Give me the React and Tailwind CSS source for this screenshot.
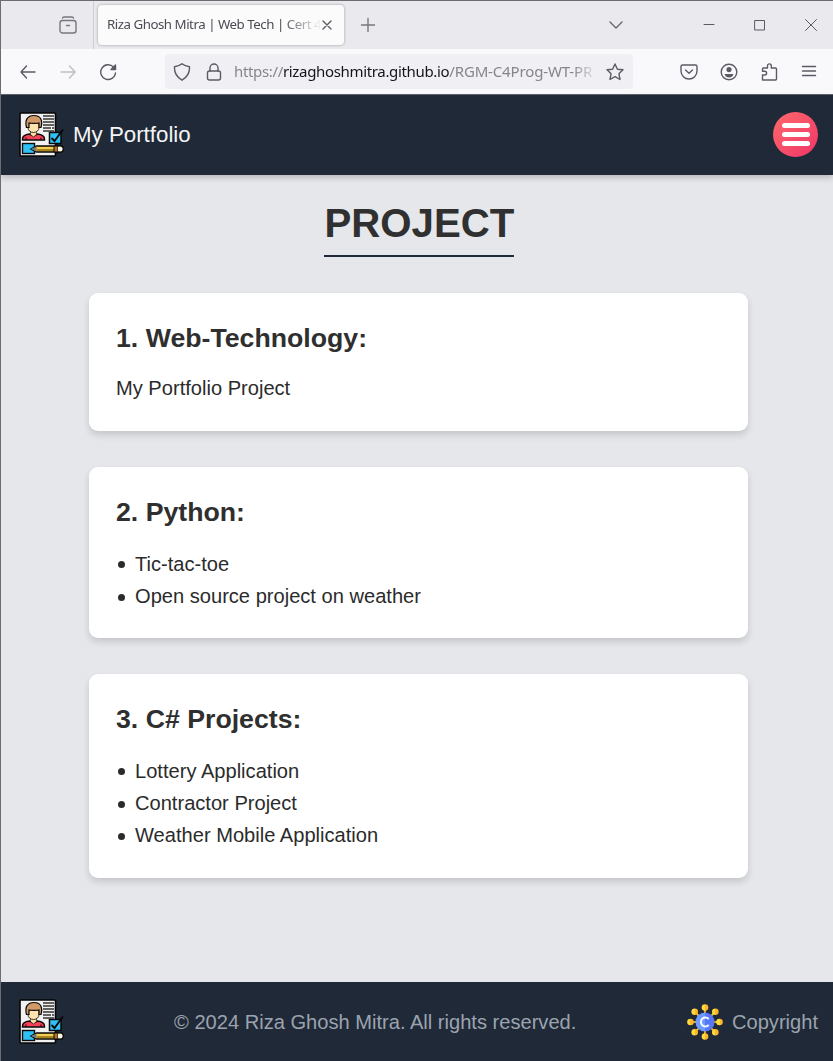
import React from "react";

function Logo() {
  return (
    <svg viewBox="0 0 45 46" className="h-[46px] w-[45px] shrink-0">
      <rect x="1" y="1" width="35.5" height="43" rx="1" fill="#f1f1f2" stroke="#050505" strokeWidth="1.6" />
      <path d="M24 4h11M24 7h11M24 10h11M24 13h11M24 16h8M33 16h2M24 19h11" stroke="#343434" strokeWidth="1.4" />
      <path d="M3.5 28v-1c0-3.5 3.5-4.500 7-5l4 2 4-2c4 .5 7 1.500 7 5v1z" fill="#f73f58" stroke="#090909" strokeWidth="1.4" />
      <path d="M7 25.500v2M22 25.500v2" stroke="#090909" />
      <path d="M11.500 19v3.500l3 2.500 3-2.500V19z" fill="#ffdda0" stroke="#090909" strokeWidth=".6" />
      <path d="M9 11v4.500c0 3 2.500 5 5.500 5s5.500-2 5.500-5V11z" fill="#ffe3ae" stroke="#090909" strokeWidth=".8" />
      <path d="M7.500 15.500c-2-7.500 1-12 7.500-12s9 4.500 7 12h-2v-4.500c-4 .5-7 .3-10 0v4.500z" fill="#d29a69" stroke="#090909" strokeWidth="1.2" />
      <rect x="30.5" y="20.500" width="11.500" height="11" fill="#2fc1f5" stroke="#090909" strokeWidth="1.5" />
      <path d="m32.500 26 3 3L44 17.500" fill="none" stroke="#050505" strokeWidth="1.800" />
      <rect x="3.500" y="31.500" width="12" height="10" fill="#2fc1f5" stroke="#090909" strokeWidth="1.4" />
      <path d="m12 37 5.500-3H42c3 0 3 6 0 6H17.500z" fill="#e9b62f" stroke="#090909" strokeWidth="1.400" />
      <path d="m12 37 5.500-2.500v5z" fill="#777b80" />
      <path d="M18 36h17" stroke="#ffe87a" />
      <path d="M18 38h17" stroke="#2b260f" strokeWidth=".7" />
      <path d="M35 34v6h4v-6z" fill="#b9742b" stroke="#090909" />
      <path d="M39 34.700h2.500c2.500 0 2.500 4.600 0 4.600H39z" fill="#f6f6f6" />
    </svg>
  );
}

function CopyrightIcon() {
  const rays = [
    [18, 3.5], [28.3, 7.7], [32.5, 18], [28.3, 28.3], [18, 32.5], [7.7, 28.3], [3.5, 18], [7.7, 7.7],
  ];
  return (
    <svg viewBox="0 0 36 36" className="h-9 w-9 shrink-0">
      <defs>
        <linearGradient id="ray" x1="0" x2="1">
          <stop offset=".5" stopColor="#ffdc3b" />
          <stop offset=".5" stopColor="#fdb62e" />
        </linearGradient>
        <linearGradient id="coin" x1="0" x2="1">
          <stop offset=".5" stopColor="#6d9aff" />
          <stop offset=".5" stopColor="#5877f7" />
        </linearGradient>
      </defs>
      {rays.map(([x, y]) => (
        <g key={`${x}-${y}`}>
          <path d={`M18 18L${x} ${y}`} stroke="#f9bf35" strokeWidth="1.7" />
          <circle cx={x} cy={y} r="3.300" fill="url(#ray)" />
        </g>
      ))}
      <circle cx="18" cy="18" r="9.500" fill="url(#coin)" />
      <path d="M21.700 15.200a4.400 4.400 0 1 0 0 5.600" fill="none" stroke="#f4f8ff" strokeWidth="2" />
    </svg>
  );
}

function Glyph({ children, className = "" }) {
  return (
    <svg
      viewBox="0 0 18 18"
      className={`h-[18px] w-[18px] shrink-0 fill-none stroke-[#5b5b66] ${className}`}
      strokeWidth="1.4"
      strokeLinecap="round"
      strokeLinejoin="round"
    >
      {children}
    </svg>
  );
}

function TabBar() {
  return (
    <div className="flex h-12 items-center bg-[#eae9ee]">
      <div className="flex h-full w-[93px] items-center border-r border-[#cfced4] pl-[58px]">
        <Glyph className="stroke-[#77777f]">
          <rect x="1" y="4.500" width="16" height="12.500" rx="2.500" />
          <path d="M3.500 2q.3-1 1.500-1h8q1.200 0 1.500 1M7.500 9.500h3" />
        </Glyph>
      </div>
      <div className="ml-1 flex h-10 w-[246px] items-center rounded bg-[#fbfbfc] pl-[9px] shadow-[0_0_3px_rgba(0,0,0,0.35)]">
        <div className="w-[213px] whitespace-nowrap text-[13.3px] tracking-[-0.48px] text-[#4b4b53] [mask-image:linear-gradient(to_right,black_82%,transparent_101%)]">
          Riza Ghosh Mitra | Web Tech | Cert 4
        </div>
        <Glyph className="-ml-[2px] stroke-[#4b4b53]"><path d="m5 5 8 8m0-8-8 8" /></Glyph>
      </div>
      <Glyph className="ml-[15px] stroke-[#77777f]"><path d="M9 2.500v13M2.500 9h13" /></Glyph>
      <div className="ml-auto flex items-center pr-[13px]">
        <Glyph className="mr-[75px] stroke-[#66666e]"><path d="m3 6 6 6 6-6" /></Glyph>
        <Glyph className="mr-[33px]"><path d="M4 8.500h10" strokeWidth="1" /></Glyph>
        <Glyph className="mr-[33px]"><path d="M4 4.500h9.500V14H4z" strokeWidth="1" /></Glyph>
        <Glyph><path d="m3.500 3.500 11 11m0-11-11 11" strokeWidth="1" /></Glyph>
      </div>
    </div>
  );
}

function Toolbar() {
  return (
    <div className="flex h-[46px] items-center border-b border-[#62646c] bg-[#f9f9fb] pl-[18px]">
      <Glyph><path d="M16 9H2m5.500-6L2 9l5.500 6" /></Glyph>
      <Glyph className="ml-[22px] stroke-[#bdbdc3]"><path d="M2 9h14m-5.500-6L16 9l-5.500 6" /></Glyph>
      <Glyph className="ml-[22px]">
        <path d="M16.500 10a7.400 7.400 0 1 1-2-6l2 2" />
        <path d="M16.500 2v4.500H12z" fill="#5b5b66" />
      </Glyph>
      <div className="ml-[48px] flex h-[35px] w-[468px] items-center rounded bg-[#f0f0f4] pl-2">
        <Glyph><path d="M9 .8c2 1.700 4 2.500 7.500 2.900.4 6-1.500 10-7.500 13.500C3 13.700 1.100 9.700 1.500 3.700 5 3.300 7 2.500 9 .8z" /></Glyph>
        <Glyph className="ml-[14px]">
          <rect x="2.500" y="8" width="13" height="9" rx="2" />
          <path d="M5 8V5a4 4 0 0 1 8 0v3" />
        </Glyph>
        <div className="ml-[11px] w-[364px] whitespace-nowrap text-[15px] tracking-[-0.34px] text-[#85858d] [mask-image:linear-gradient(to_right,black_93%,transparent_100%)]">
          https://<span className="text-[#15141a]">rizaghoshmitra.github.io</span><span className="tracking-[-0.15px]">/RGM-C4Prog-WT-PR</span>
        </div>
        <Glyph className="ml-[8px]"><path d="m9 1 2.400 5.200 5.600.6-4.100 3.900 1.100 5.800L9 13.700l-5 2.800 1.100-5.800L1 6.800l5.600-.6z" /></Glyph>
      </div>
      <div className="ml-auto flex items-center gap-[22px] pr-[15px]">
        <Glyph><path d="M2.500 2h13q1.500 0 1.500 1.500V8A8 8 0 0 1 1 8V3.500Q1 2 2.500 2zM5.500 7 9 10.300 12.500 7" /></Glyph>
        <Glyph>
          <circle cx="9" cy="9" r="7.800" />
          <circle cx="9" cy="6.600" r="2.600" fill="#5b5b66" stroke="none" />
          <path d="M4.500 11h9c-.5 2.500-2.500 3.500-4.500 3.500S5 13.500 4.500 11z" fill="#5b5b66" stroke="none" />
        </Glyph>
        <Glyph><path d="M2.500 17v-5h2.200a1.900 1.900 0 0 0 0-3.800H2.500V6q0-1 1-1h4V2.800a1.900 1.900 0 0 1 3.800 0V5h4.200q1 0 1 1v10q0 1-1 1z" /></Glyph>
        <Glyph><path d="M2.500 3.500h13m-13 4.500h13m-13 4.500h13" /></Glyph>
      </div>
    </div>
  );
}

function Card({ title, children, className }) {
  return (
    <section className={`w-[659px] rounded-[9px] bg-white px-[27px] pt-[27px] text-[20.1px] leading-[32.3px] text-[#2b2b2b] shadow-[0_4px_7px_rgba(0,0,0,0.14)] ${className}`}>
      <h2 className="mb-[17px] whitespace-nowrap text-[26.7px] font-bold leading-9 text-[#2f2f2f]">{title}</h2>
      {children}
    </section>
  );
}

function Items({ items }) {
  return (
    <ul className="pt-[0.6px]">
      {items.map((item) => (
        <li key={item} className="flex items-center">
          <span className="ml-[2px] mr-[10px] mt-[2px] h-[7px] w-[7px] rounded-full bg-[#2b2b2b]" />
          {item}
        </li>
      ))}
    </ul>
  );
}

export default function App() {
  return (
    <div className="flex h-[1061px] w-[833px] flex-col overflow-hidden border-l border-t border-[#6d6c70] bg-[#e5e7eb] font-['Liberation_Sans',Arial,sans-serif]">
      <div className="shrink-0 font-['Noto_Sans',sans-serif]">
        <TabBar />
        <Toolbar />
      </div>
      <header className="flex h-20 shrink-0 items-center bg-[#1f2937] pl-[18px] pr-[15px] shadow-[0_3px_6px_rgba(0,0,0,0.2)]">
        <Logo />
        <span className="ml-[9px] whitespace-nowrap text-[22.3px] text-[#f3f4f6]">My Portfolio</span>
        <div className="-mt-px ml-auto flex h-[45px] w-[45px] flex-col items-center justify-center gap-1 rounded-full bg-linear-to-br from-[#ff686b] to-[#ee3269]">
          <span className="h-[5px] w-7 rounded-full bg-white" />
          <span className="h-[5px] w-7 rounded-full bg-white" />
          <span className="h-[5px] w-7 rounded-full bg-white" />
        </div>
      </header>
      <main className="flex flex-1 flex-col items-center pl-[3px] pt-[25px]">
        <h1 className="mb-9 h-[57px] w-[190px] whitespace-nowrap border-b-2 border-[#1f2937] pl-px text-center text-[40.2px] font-bold leading-[48px] text-[#303030]">
          PROJECT
        </h1>
        <div className="flex flex-col gap-9">
          <Card title="1. Web-Technology:" className="h-[138px]">
            <p className="-mt-px">My Portfolio Project</p>
          </Card>
          <Card title="2. Python:" className="h-[171px]">
            <Items items={["Tic-tac-toe", "Open source project on weather"]} />
          </Card>
          <Card title="3. C# Projects:" className="h-[204px]">
            <Items items={["Lottery Application", "Contractor Project", "Weather Mobile Application"]} />
          </Card>
        </div>
      </main>
      <footer className="flex h-[79px] shrink-0 items-center bg-[#1f2937] pl-[18px] pr-[15px] pt-px text-[20.1px] text-[#9ca3af]">
        <Logo />
        <span className="ml-[110px] whitespace-nowrap pt-px">© 2024 Riza Ghosh Mitra. All rights reserved.</span>
        <div className="ml-auto flex items-center gap-[9px]">
          <CopyrightIcon />
          <span className="pt-px">Copyright</span>
        </div>
      </footer>
    </div>
  );
}
